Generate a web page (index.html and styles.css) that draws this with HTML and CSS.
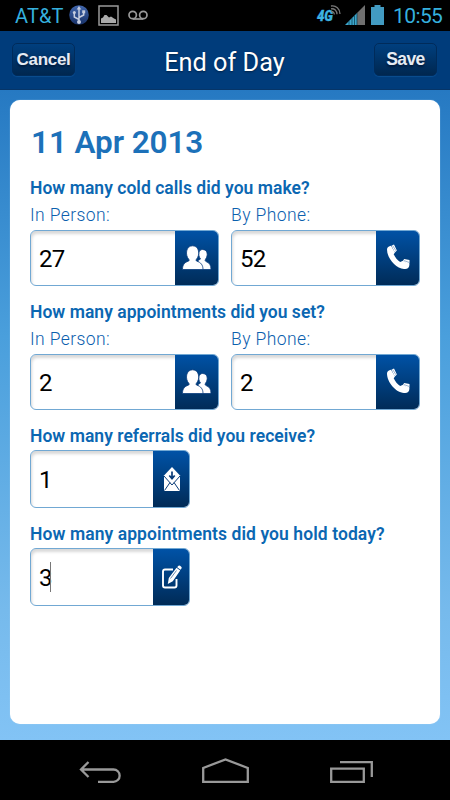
FILE: index.html
```html
<!DOCTYPE html>
<html lang="en">
<head>
<meta charset="utf-8">
<title>End of Day</title>
<link rel="stylesheet" href="styles.css">
</head>
<body>
<svg class="defs" width="0" height="0" aria-hidden="true">
  <linearGradient id="usbfill" x1="0" y1="0" x2="0" y2="1"><stop offset="0" stop-color="#4267ad"/><stop offset="1" stop-color="#173168"/></linearGradient>
  <symbol id="people" viewBox="0 0 30 26">
    <g fill="#fff" stroke="#073b7c" stroke-width=".8">
      <path d="M17 24.500l-1-9 2.500-1.500c-3-4-1.800-9.500 2-9.500 5 0 6 5.500 3 9.800-.6 1-.5 1.700.5 2.200 3.500 1.500 5 3.500 5 8z"/>
      <path d="M.5 24.500c0-4.800 2-7 5.700-8.300 1.200-.5 1.300-1.100.5-2C3 10 3.800.8 10.600.8s7.600 9.200 3.900 13.400c-.8.900-.7 1.500.5 2 3.700 1.300 6 3.500 6 8.300z"/>
    </g>
  </symbol>
  <symbol id="phone" viewBox="0 0 25 28">
    <path fill="#fff" d="M1 6.500C1 4.500 2.800 3.300 5 2.800l4 6.700-1.300 1.700c1.500 3.300 3.700 5.800 6.500 7.800l2.800-1.300 6.500 3.600c-.2 3.800-2.500 5.200-5.500 4.700C9.500 25.500 1 15 1 6.500z"/>
    <path fill="#fff" d="M5.400 2.800L8 1.500l2.900 6-2 1.900zM16.900 17.700l1.300-1.700 5.300 1v3.500l-1.200.9z"/>
    <path fill="none" stroke="#3a69a0" stroke-width=".5" d="M6.800 2.800l3.200 5M17.800 17.500l5.500 2"/>
  </symbol>
  <symbol id="mail" viewBox="0 0 18 26">
    <path fill="#fff" d="M1 9.500L9 1l8 8.500V25H1z"/>
    <path fill="none" stroke="#0a3c78" stroke-width="1" d="M1 10l8 9 8-9M1.500 24.500l5.500-8M16.500 24.500l-5.500-8"/>
    <path fill="none" stroke="#0a3c78" stroke-width="1.700" d="M9 5.500V12M6.300 9.500L9 12.600l2.700-3.100"/>
  </symbol>
  <symbol id="edit" viewBox="0 0 20 24">
    <path fill="none" stroke="#fff" stroke-width="1.900" d="M11 4.500H3q-2 0-2 2v14q0 2 2 2h9.500q2 0 2-2V14"/>
    <path fill="#fff" d="M5.800 19l1-6L14.500 2.700 18.200 5.500l-7.400 10.700zM15.200 2.200l.9-1.200q.9-.9 2-.2l1.100.9q.9.900.2 1.900l-.9 1.200z"/>
    <path stroke="#0a3c78" stroke-width=".6" fill="none" d="M8.500 13.500l6-8"/>
  </symbol>
</svg>
<div class="screen">
  <div class="status">
    <span class="carrier">AT&amp;T</span>
    <svg class="usb" width="20" height="20" viewBox="0 0 20 20"><circle cx="10" cy="10" r="9.800" fill="url(#usbfill)"/><g fill="none" stroke="#c5cde0" stroke-width="1.500"><path d="M10 17V3M10 14.500L5.300 12V7.500M10 12.500l4.700-2.500V6.500"/></g><g fill="#c5cde0"><path d="M10 1l2.300 3.500H7.700z"/><circle cx="10" cy="17" r="2"/><circle cx="5.300" cy="7.500" r="1.500"/><path d="M13.200 5.300h3v3h-3z"/></g></svg>
    <svg class="pic" width="21" height="21" viewBox="0 0 21 21"><path d="M1 1h19v19H1z" fill="none" stroke="#999" stroke-width="1.500"/><path d="M3 18v-4.500l2-1 1.500-2.500h2l2.500 2.500 2-1 3 2 2 1V18z" fill="#aaa"/></svg>
    <svg class="vm" width="20" height="11" viewBox="0 0 20 11"><g fill="none" stroke="#999" stroke-width="1.700"><circle cx="4.700" cy="5" r="3.700"/><circle cx="15.300" cy="5" r="3.700"/><path d="M4.700 9h10.600"/></g></svg>
    <span class="grow"></span>
    <svg class="net" width="24" height="18" viewBox="0 0 24 18"><text x="0" y="16" class="fourg" textLength="16" lengthAdjust="spacingAndGlyphs">4G</text><g fill="none" stroke="#777" stroke-width="1.300"><path d="M14 1c5-1 9 3 9 8M14 3.800c3.500-.5 6 2 6 5.500M14 6.500c2-.2 3.300 1 3.300 3"/></g></svg>
    <svg class="sig" width="20" height="20" viewBox="0 0 20 20"><path fill="#3da6cb" d="M0 20L12 8v12z"/><path fill="#707070" d="M12 8l8-8v20h-8z"/><path stroke="#07384a" stroke-width=".7" d="M4 16v4M7 13v7M9.500 10.500V20M12 8v12"/></svg>
    <svg class="bat" width="13" height="20" viewBox="0 0 13 20"><path fill="#429bc2" d="M0 2h3.500V0h6v2H13v18H0z"/></svg>
    <span class="clock">10:55</span>
  </div>
  <header class="bar">
    <button class="btn"><span class="cancel">Cancel</span></button>
    <h1>End of Day</h1>
    <button class="btn"><span class="save">Save</span></button>
  </header>
  <main>
    <section class="card">
      <h2>11 Apr 2013</h2>
      <h3>How many cold calls did you make?</h3>
      <div class="pair">
        <div><label>In Person:</label><div class="field"><span class="val">27</span><span class="ico"><svg class="people" width="30" height="26"><use href="#people"/></svg></span></div></div>
        <div><label>By Phone:</label><div class="field"><span class="val">52</span><span class="ico"><svg class="phone" width="25" height="28"><use href="#phone"/></svg></span></div></div>
      </div>
      <h3>How many appointments did you set?</h3>
      <div class="pair">
        <div><label>In Person:</label><div class="field"><span class="val">2</span><span class="ico"><svg class="people" width="30" height="26"><use href="#people"/></svg></span></div></div>
        <div><label>By Phone:</label><div class="field"><span class="val">2</span><span class="ico"><svg class="phone" width="25" height="28"><use href="#phone"/></svg></span></div></div>
      </div>
      <h3>How many referrals did you receive?</h3>
      <div class="field small"><span class="val">1</span><span class="ico"><svg width="18" height="26"><use href="#mail"/></svg></span></div>
      <h3 class="wide">How many appointments did you hold today?</h3>
      <div class="field small"><span class="val typed">3</span><i class="caret"></i><span class="ico"><svg width="20" height="24"><use href="#edit"/></svg></span></div>
    </section>
  </main>
  <nav>
    <svg width="42" height="23" viewBox="0 0 42 23"><path d="M9.500 1L2 8.500l7.500 7.500M2 8.500h32.500a6 6 0 0 1 0 12.300H19" /></svg>
    <svg width="47" height="25" viewBox="0 0 47 25"><path d="M1.200 23.800V10L23.500 1.400 45.800 10v13.800z"/></svg>
    <svg width="43" height="22" viewBox="0 0 43 22"><path d="M1.200 7.700h32.600v13.100H1.200zM10 1.200h31.800V16"/></svg>
  </nav>
</div>
</body>
</html>
```
FILE: styles.css
```css
* { box-sizing: border-box; }
body { margin: 0; font-family: Roboto, "Liberation Sans", sans-serif; }
.defs { position: absolute; }
.screen { width: 450px; height: 800px; display: flex; flex-direction: column; overflow: hidden; background: #000; }
svg { display: block; flex: none; overflow: visible; }
.status { height: 31px; display: flex; align-items: flex-start; padding: 5px 8px 0 15px; color: #35b0de; }
.carrier { width: 54px; font-size: 20px; line-height: 23px; letter-spacing: 0.1px; font-weight: 400; }
.usb { margin-right: 9px; }
.pic { margin-right: 9px; }
.vm { margin-top: 5px; }
.grow { flex: 1; }
.fourg { font: italic 900 14px Roboto, sans-serif; fill: #3db3e2; stroke: #3db3e2; stroke-width: .3px; }
.net { margin-right: 4px; }
.sig { margin-right: 6px; }
.bat { margin-right: 9px; }
.clock { width: 49px; font-size: 21px; line-height: 23px; white-space: nowrap; letter-spacing: -0.6px; font-weight: 400; }
.bar { height: 59px; background: #003c7b; display: flex; justify-content: space-between; padding: 12px 13px 0 12px; border-bottom: 1px solid #063568; }
.btn { width: 63px; height: 33px; padding: 0; border: 1px solid #002b5a; border-radius: 5px; background: linear-gradient(#003f7e, #002750); box-shadow: 0 1px 1px #0a4e91; color: #e6ebf3; font: bold 18px "Liberation Sans", Arial, sans-serif; line-height: 31px; text-shadow: 0 2px 2px #001a3b; display: flex; justify-content: center; }
.cancel { font-size: 17px; letter-spacing: -0.3px; }
.save { font-size: 17.5px; letter-spacing: -0.6px; }
h1 { margin: 5px 0 0; font-size: 25.3px; line-height: 30px; font-weight: 400; color: #fff; text-shadow: 0 1px 2px #002347; }
main { height: 650px; padding: 10px; background: linear-gradient(#2679c2, #4a9fdc 38%, #76baec 80%, #82c3f5); }
.card { height: 624px; background: #fff; border-radius: 10px; padding: 23px 20px 0; box-shadow: 0 0 1px #bddcf3; }
h2 { margin: 0 0 12px; padding-left: 1px; font-size: 31.5px; line-height: 40px; font-weight: 650; color: #1c71b9; letter-spacing: -0.1px; }
h3 { margin: 0; padding-top: 1px; height: 24px; font-size: 17.5px; line-height: 24px; font-weight: 600; color: #0b67b2; white-space: nowrap; letter-spacing: 0.03px; }
.wide { letter-spacing: 0.08px; }
label { display: block; font-size: 17.5px; line-height: 22px; font-weight: 320; color: #0b60ae; margin: 5px 0 4px; letter-spacing: 0.4px; }
.pair { display: grid; grid-template-columns: 189px 189px; gap: 12px; margin-bottom: 13px; }
.field { height: 56px; width: 189px; display: flex; align-items: center; border: 1px solid #71a8d3; border-radius: 6px; overflow: hidden; background: #fff; box-shadow: inset 1px 3px 3px #d9d9d9; }
.val { padding: 2px 0 0 8px; font-size: 24px; line-height: 28px; font-weight: 400; color: #000; letter-spacing: -0.8px; }
.ico { margin: -1px -1px -1px auto; width: 44px; height: 58px; display: flex; align-items: center; justify-content: center; background: linear-gradient(#0053a8, #002a55); flex: none; }
.small { width: 160px; height: 58px; margin: 3px 0 13px; }
.small .ico { width: 37px; }
.phone { margin-top: -2px; }
.typed { margin-right: -2px; }
.caret { width: 1px; height: 30px; background: #777; }
nav { height: 60px; display: flex; align-items: flex-start; padding: 20px 0 0 79px; }
nav svg:nth-child(1) { margin: 1px 81px 0 0; }
nav svg:nth-child(2) { margin: -2px 81px 0 0; }
nav svg:nth-child(3) { margin: 1px 0 0; }
nav path { fill: none; stroke: #999; stroke-width: 2.300; }
```
